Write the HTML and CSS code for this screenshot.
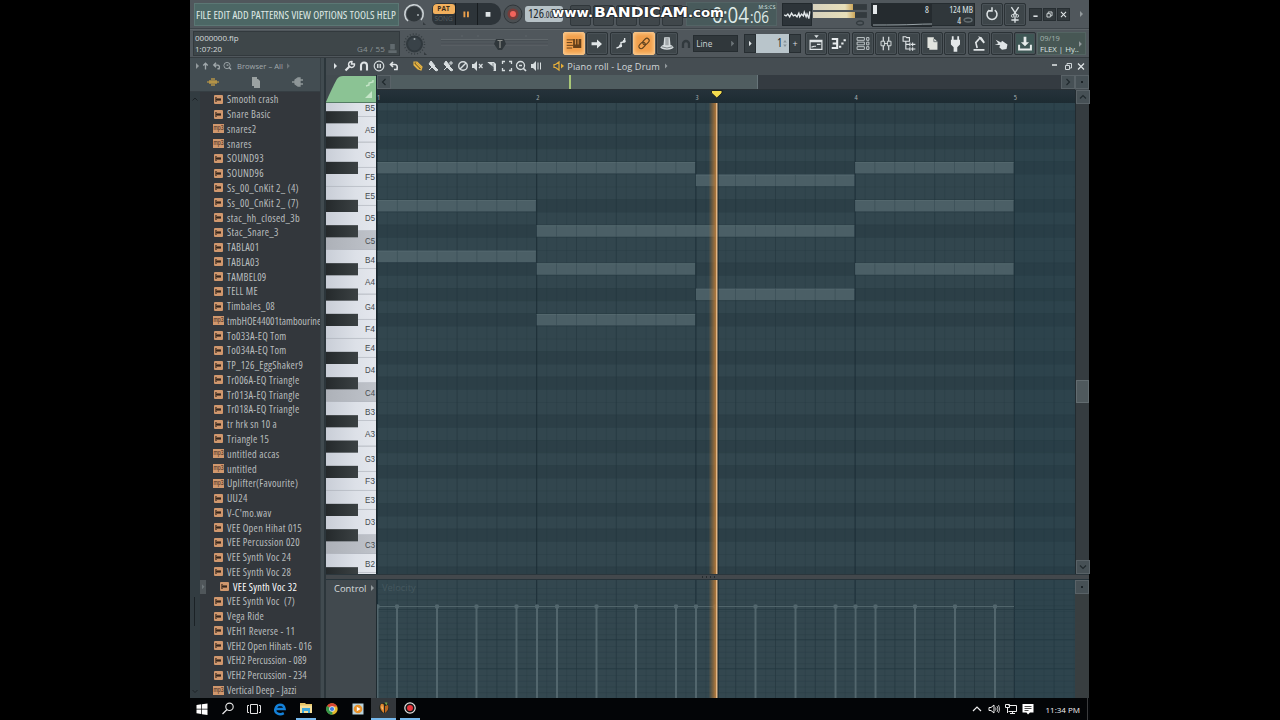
FILE: index.html
```html
<!DOCTYPE html>
<html lang="en">
<head>
<meta charset="utf-8">
<title>Piano roll - Log Drum</title>
<link rel="stylesheet" href="styles.css">
</head>
<body>
<main class="desktop">
  <div class="watermark">
    <svg width="180" height="24" viewBox="0 0 180 24"><text x="3" y="16.500" textLength="41" lengthAdjust="spacingAndGlyphs" font-size="12.500">www.</text><text x="45" y="16.500" textLength="94" lengthAdjust="spacingAndGlyphs" font-size="13.500">BANDICAM</text><text x="139" y="16.500" textLength="36" lengthAdjust="spacingAndGlyphs" font-size="12.500">.com</text></svg>
  </div>
  <header class="toolbar">
    <div class="row">
      <nav class="menu"><span>FILE</span><span>EDIT</span><span>ADD</span><span>PATTERNS</span><span>VIEW</span><span>OPTIONS</span><span>TOOLS</span><span>HELP</span></nav>
      <svg class="knob" viewBox="0 0 32 28"><circle cx="15" cy="14" r="7.5" fill="#30373b"/><path d="M9 21A9.2 9.2 0 1 1 22 20" fill="none" stroke="#cbd2d5" stroke-width="1.6"/><circle cx="19" cy="15" r="1" fill="#aab2b5"/><path d="M24 25v-3l3 3z" fill="#343b3f"/></svg>
      <div class="transport">
        <div class="patsong"><b>PAT</b><i>SONG</i></div>
        <svg viewBox="0 0 22 22"><path d="M7.800 8.500h2v6h-2zM11.500 8.500h2v6h-2z" fill="#eca04b"/></svg>
        <svg viewBox="0 0 22 22"><path d="M8 9h5v5H8z" fill="#dfe4e6"/></svg>
      </div>
      <svg class="rec" viewBox="0 0 20 20"><circle cx="10" cy="10" r="9" fill="#4b4f52" stroke="#30363a"/><circle cx="10" cy="10" r="5.500" fill="#783c39"/><circle cx="10" cy="10" r="3" fill="#f2645c"/></svg>
      <div class="tempo">126<small>.000</small></div>
      <div class="ghosts"><span></span><span></span><span></span><span></span><span></span></div>
      <div class="clock"><svg width="92" height="24" viewBox="0 0 92 24"><text x="25" y="20" font-size="21.500" textLength="37" lengthAdjust="spacingAndGlyphs">0:04</text><text x="63" y="20" font-size="15.500" textLength="19" lengthAdjust="spacingAndGlyphs">:06</text><text x="71.500" y="6" font-size="5" textLength="17">M:S:CS</text></svg></div>
      <svg class="scope" viewBox="0 0 30 23"><path d="M1 12l2 1 2-2 2 3 2-4 2 3 2-1 2 2 2-4 1 4 2-3 2 2 1-4 2 5 1-3 2 5 1-8" fill="none" stroke="#e5eaec" stroke-width="1.500"/></svg>
      <div class="meters"><span></span><span class="long"></span><svg viewBox="0 0 10 6"><ellipse cx="5" cy="3" rx="3.500" ry="2" fill="none" stroke="#343c40" stroke-width="1.300"/></svg></div>
      <div class="cpu">
        <svg viewBox="0 0 60 23"><path d="M1 1h4v9H1z" fill="#e4e8ea"/><path d="M1 21q30 0 40-.5t19-.5" fill="none" stroke="#98a2a6"/></svg>
        <span class="voices">8</span><div class="mem"><span>124 MB</span><span>4 <svg viewBox="0 0 10 6"><ellipse cx="5" cy="3" rx="4" ry="2" fill="none" stroke="#657074" stroke-width="1.300"/></svg></span></div>
      </div>
      <div class="tools first">
        <svg class="btn" viewBox="0 0 22 22"><path d="M8 6.300A5.500 5.500 0 1 0 14 6.300M11 3v4H7.500" fill="none" stroke="#dbe1e3" stroke-width="1.700"/></svg>
        <svg class="btn" viewBox="0 0 22 22"><path d="M7 3l6 9M15 3l-6 9M7 17h8M11 13v7" fill="none" stroke="#dbe1e3" stroke-width="1.500"/><circle cx="8.500" cy="12.500" r="1.500" fill="none" stroke="#dbe1e3"/><circle cx="13.500" cy="12.500" r="1.500" fill="none" stroke="#dbe1e3"/></svg>
      </div>
      <div class="winbtns">
        <svg viewBox="0 0 13 13"><path d="M4 8.500h5" stroke="#e3e8ea" stroke-width="1.800"/></svg>
        <svg viewBox="0 0 13 13"><path d="M3.500 5.500h4v4h-4zM5 5V3.500h4.500v4.500H8" fill="none" stroke="#e3e8ea"/></svg>
        <svg viewBox="0 0 13 13"><path d="M3.500 3.500l6 6M9.500 3.500l-6 6" stroke="#e3e8ea" stroke-width="1.200"/></svg>
      </div>
      <span class="arrow end"></span>
    </div>
    <div class="row second">
      <div class="hint"><div class="file">0000000.flp</div><div class="pos"><span>1:07:20</span><em>G4 / 55 <svg viewBox="0 0 9 12"><path d="M2 1h5v6H2zM0 8h9v3H0z" fill="#616a6e"/></svg></em></div></div>
      <svg class="knob" viewBox="0 0 32 28"><circle cx="14.500" cy="14" r="10" fill="none" stroke="#353d41" stroke-width="1.500" stroke-dasharray="1 2"/><circle cx="14.500" cy="14" r="8.500" fill="#30383d"/><circle cx="14.500" cy="14" r="6.500" fill="#394248"/><circle cx="14.500" cy="9" r="1" fill="#99a2a6"/><path d="M24 25v-3l3 3z" fill="#343b3f"/></svg>
      <svg class="slider" viewBox="0 0 130 28"><path d="M9 9.500h107M9 15h107" stroke="#60676b"/><path d="M9 10.500h107M9 14h107" stroke="#484f54"/><path d="M30 5v2M46 5v2M94 5v2" stroke="#5c6468"/><path d="M64 9h8l2 5-4 6h-4l-4-6z" fill="#30373b"/><path d="M65.500 10.500h5M68 11v7" stroke="#8b8e8b" stroke-width="1.200"/></svg>
      <div class="tools">
        <svg class="btn on" viewBox="0 0 22 22"><path d="M3 7h7M3 10h6M3 13h7M3 16h6" stroke="#65401a" stroke-width="1.100"/><path d="M10 6h2v6h1V6h2v6h1V6h3v10h-9z" fill="#65401a"/></svg>
        <svg class="btn" viewBox="0 0 22 22"><path d="M5 9.500h6V6.500l5.500 5-5.500 5v-3.500H5z" fill="#e1e6e8"/></svg>
        <svg class="btn" viewBox="0 0 22 22"><path d="M6 16l5-2V10l4-1V5" fill="none" stroke="#e1e6e8" stroke-width="1.500"/><circle cx="10.500" cy="13.500" r="1.700" fill="#e1e6e8"/><circle cx="14.500" cy="8.500" r="1.500" fill="#e1e6e8"/></svg>
        <svg class="btn on" viewBox="0 0 22 22"><g transform="rotate(-45 11 11)" fill="none" stroke="#5e421f" stroke-width="1.200"><rect x="4" y="8.500" width="8" height="5" rx="2.500"/><rect x="10" y="8.500" width="8" height="5" rx="2.500"/></g></svg>
        <svg class="btn" viewBox="0 0 22 22"><path d="M8 4h6l1 10H7z" fill="#d7dddf"/><ellipse cx="11" cy="15" rx="7" ry="3" fill="#d7dddf"/><path d="M5 14.500q6 3 12 0M10 5v8M12 5v8" fill="none" stroke="#5b6366" stroke-width=".8"/></svg>
      </div>
      <svg class="magnet" viewBox="0 0 12 12"><path d="M3 10V6a3 3 0 0 1 6 0v4" fill="none" stroke="#31393d" stroke-width="2.300"/></svg>
      <div class="select"><span>Line</span><span class="arrow dim"></span></div>
      <div class="pattern"><div><span class="arrow light"></span></div><b>1</b><i><svg viewBox="0 0 4 10"><path d="M0 4l2-3 2 3zM0 6l2 3 2-3z" fill="#879297"/></svg></i><div>+</div></div>
      <div class="tools panels">
        <svg class="btn" viewBox="0 0 22 22"><path d="M9 2h5l-2.500 3z" fill="#dfe4e6"/><path d="M4.500 7.500h13v10h-13zM4 9h14M6 15l3-1M9 14h2M12 12h4" fill="none" stroke="#dfe4e6" stroke-width="1.300"/></svg>
        <svg class="btn" viewBox="0 0 22 22"><path d="M3 6h6v10H3M4 11h5" fill="none" stroke="#e8ecee" stroke-width="2.300"/><path d="M11 14.500h2.500M13.500 11h2.500M16 7.500h2.500" stroke="#e8ecee" stroke-width="2.300"/></svg>
        <svg class="btn" viewBox="0 0 22 22"><path d="M4.500 4.500h8v3h-8zM4.500 9.500h8v3h-8zM4.500 14.500h8v3h-8zM15 4.500h2.500v3H15zM15 9.500h2.500v3H15zM15 14.500h2.500v3H15z" fill="none" stroke="#cbd2d5" stroke-width="1"/></svg>
        <svg class="btn" viewBox="0 0 22 22"><path d="M8 3.500v15M14 3.500v15" stroke="#dfe4e6" stroke-width="1.300"/><path d="M5.500 8.500h4v5h-4zM12.500 8.500h4v5h-4zM9 11h4" fill="#454e52" stroke="#dfe4e6"/></svg>
        <svg class="btn" viewBox="0 0 22 22"><path d="M4.500 3.500h3l1 1h3v4h-7zM7.500 9v8h5M7.500 12h4M12 10v4M12 15v4M13 12h5M13 17h5M15 10v4M15 15v4" fill="none" stroke="#dfe4e6" stroke-width="1.200"/></svg>
        <svg class="btn" viewBox="0 0 22 22"><path d="M6 4h7v2h1l3 3v9H8v-2H6z" fill="#e2e4df"/><path d="M13 6v3h3.500" fill="none" stroke="#687174"/></svg>
        <svg class="btn" viewBox="0 0 22 22"><path d="M7.500 3h2v4h4V3h2v4h1v5l-3 3v5h-4v-5l-3-3V7h1z" fill="#e4e8ea"/></svg>
        <svg class="btn" viewBox="0 0 22 22"><path d="M12 5l-4.500 5 1.500 6" fill="none" stroke="#dfe4e6" stroke-width="1.800"/><path d="M10 3l4 1 3.500 5.500-1.500 1.500-3.500-4zM5 17h12v2H5z" fill="#dfe4e6"/></svg>
        <svg class="btn" viewBox="0 0 22 22"><path d="M4 7l6 3 1-2 6 4-1 5-5 1-3-3 1-2-6-1 4-1z" fill="#dfe4e6"/></svg>
        <svg class="btn green" viewBox="0 0 22 22"><path d="M9.500 3.500h3v6h3L11 14 6.500 9.500h3z" fill="#e7eceb"/><path d="M4.500 12.500v5h13v-5" fill="none" stroke="#e7eceb" stroke-width="2.200"/></svg>
      </div>
      <div class="news"><span>09/19</span><b>FLEX | Hy..</b><i class="arrow"></i></div>
    </div>
  </header>

  <section class="workspace">
    <aside class="browser">
      <div class="browser-head">
        <div class="crumbs"><span class="arrow"></span><svg viewBox="0 0 10 10"><path d="M5 9V2M2.500 4.500L5 2l2.500 2.500" fill="none" stroke="#a0a8ab" stroke-width="1.500"/></svg><svg viewBox="0 0 10 10"><path d="M2 4h4q3 0 2 4H6M4.500 1.500L2 4l2.500 2.500" fill="none" stroke="#a0a8ab" stroke-width="1.500"/></svg><svg viewBox="0 0 10 10"><circle cx="4.500" cy="4.500" r="3.500" fill="none" stroke="#a0a8ab"/><path d="M4 4h2M6.500 6.500L9 9" stroke="#a0a8ab" stroke-width="1.500"/></svg><span class="where">Browser – All</span><span class="arrow dim"></span></div>
        <div class="tabs"><svg viewBox="0 0 12 12"><path d="M0 6h12M3 4v4M5 2v8M7 2v8M9 4v4" stroke="#d0a545" stroke-width="1.200"/></svg><svg viewBox="0 0 12 12"><path d="M2 1h5v2h1l2 2v7H4v-2H2z" fill="#9ba2a2"/></svg><svg viewBox="0 0 12 12"><path d="M0 6h3M3 4l3-2h2v8H6L3 8zM8 4h3M8 8h3" fill="#8e9698" stroke="#8e9698" stroke-width="1.300"/></svg></div>
      </div>
      <div class="browser-body">
        <div class="browser-scroll"><svg viewBox="0 0 8 8"><path d="M1.500 5.500L4 3l2.500 2.500" fill="none" stroke="#1c2327"/></svg><span></span><svg viewBox="0 0 8 8"><path d="M1.500 3L4 5.500 6.500 3" fill="none" stroke="#1c2327"/></svg></div>
        <ul class="files" id="files"></ul>
      </div>
    </aside>
    <div class="divider"></div>
    <section class="roll">
      <div class="roll-title">
        <span class="arrow light"></span>
        <svg viewBox="0 0 12 12"><path d="M1.500 10.500L6 6" stroke="#e0e4e6" stroke-width="2.200"/><path d="M10.500 4A3 3 0 1 1 8 1.500L7.500 4z" fill="none" stroke="#e0e4e6" stroke-width="1.400"/></svg>
        <svg viewBox="0 0 12 12"><path d="M3 10.500V5.500a3 3 0 0 1 6 0v5" fill="none" stroke="#e0e4e6" stroke-width="2.100"/></svg>
        <svg viewBox="0 0 12 12"><circle cx="6" cy="6" r="4.800" fill="none" stroke="#d2d8da" stroke-width="1.200"/><path d="M4 4h1.500v4H4zM6.500 4H8v4H6.500z" fill="#d2d8da"/></svg>
        <svg viewBox="0 0 12 12"><path d="M2 4.500h5q3 0 2 5H6M5 2L2.500 4.500 5 7" fill="none" stroke="#e0e4e6" stroke-width="1.600"/></svg>
        <svg class="gap" viewBox="0 0 12 12"><path d="M2 2h3l5 5-1 3-3-1-4-4zM4 3l5 5M2 4l5 5" fill="#6c5624" stroke="#e5b344" stroke-width="1.200"/></svg>
        <svg viewBox="0 0 12 12"><path d="M4 1l4 5-2 2-4-4zM7 6l4 4-2 1-3-3zM2 10l4-4" fill="#d7dddf" stroke="#d7dddf"/></svg>
        <svg viewBox="0 0 12 12"><path d="M4 1l4 5-2 2-4-4zM7 6l4 4-2 1-3-3zM2 10l4-4M9 1v4M7 3h4" fill="#d7dddf" stroke="#d7dddf"/></svg>
        <svg viewBox="0 0 12 12"><circle cx="6" cy="6" r="4.300" fill="none" stroke="#d7dddf" stroke-width="1.400"/><path d="M3 9l6-6" stroke="#d7dddf" stroke-width="1.400"/></svg>
        <svg viewBox="0 0 12 12"><path d="M1 4h2l3-3v10L3 8H1z" fill="#d7dddf"/><path d="M8 4l3.500 4M11.500 4L8 8" stroke="#d7dddf" stroke-width="1.200"/></svg>
        <svg viewBox="0 0 12 12"><path d="M1 2h7l2 2v7H7.500V7z" fill="#d7dddf"/><path d="M1 2l7 8M7 3v6" stroke="#566065" stroke-width=".7"/></svg>
        <svg viewBox="0 0 12 12"><path d="M4 1.500H1.500V4M8 1.500h2.500V4M1.500 8v2.500H4M10.500 8v2.500H8" fill="none" stroke="#d7dddf" stroke-width="1.300"/></svg>
        <svg viewBox="0 0 12 12"><circle cx="5.500" cy="5.500" r="4" fill="none" stroke="#d7dddf" stroke-width="1.300"/><path d="M4 5.500h3M8 8l3 3" stroke="#d7dddf" stroke-width="1.700"/></svg>
        <svg viewBox="0 0 12 12"><path d="M1 4h2l3-3v10L3 8H1zM7.500 2.500h1v7h-1zM10 2.500h1v7h-1z" fill="#d7dddf"/></svg>
        <svg class="gap2" viewBox="0 0 12 12"><path d="M1 4.500h1.500L6 2v8L2.500 7.500H1z" fill="none" stroke="#e4ad3a" stroke-width="1.200"/><path d="M8 3.500l3 2.500-3 2.500z" fill="#e4ad3a"/></svg>
        <span class="title">Piano roll - Log Drum</span><span class="arrow"></span>
        <span class="spacer"></span>
        <div class="subwin"><svg viewBox="0 0 12 12"><path d="M4 5h5" stroke="#e3e8ea" stroke-width="1.500"/></svg><svg viewBox="0 0 12 12"><path d="M3.500 5.500h4v4h-4zM5 5V3.500h4.500v4.500H8" fill="none" stroke="#cfd5d8"/></svg><svg viewBox="0 0 12 12"><path d="M3 3.500l6 6M9 3.500l-6 6" stroke="#e3e8ea" stroke-width="1.200"/></svg></div>
      </div>
      <div class="roll-grid">
        <svg class="corner" viewBox="0 0 51 28"><path d="M0 28L0 27Q6 13 11 4q2-3 6-3h34v27z" fill="#8bc394"/><path d="M0 27.500h51" stroke="#537b63"/><path d="M50.500 0v28" stroke="#1c2b31"/><path d="M40 11l3-1V8l4-1V5" fill="none" stroke="#c5e5c8" stroke-width="1.400"/><path d="M39 23h7v-7z" fill="#c5e5c8"/></svg>
        <div class="hscroll"><span class="cap"><svg viewBox="0 0 8 8"><path d="M5.500 1L2.500 4l3 3" fill="none" stroke="#20292d" stroke-width="1.200"/></svg></span><span class="thumb"></span><span class="cap right"><svg viewBox="0 0 8 8"><path d="M2.500 1l3 3-3 3" fill="none" stroke="#20292d" stroke-width="1.200"/></svg></span></div>
        <div class="cap dot"><i></i></div>
        <svg class="ruler" id="ruler" viewBox="377 90 698 13"></svg>
        <div class="vscroll"><span class="cap"><svg viewBox="0 0 8 8"><path d="M1 5.500l3-3 3 3" fill="none" stroke="#20292d" stroke-width="1.200"/></svg></span><span class="vthumb"></span><span class="cap"><svg viewBox="0 0 8 8"><path d="M1 2.500l3 3 3-3" fill="none" stroke="#20292d" stroke-width="1.200"/></svg></span></div>
        <svg class="keys" id="keys" viewBox="326 103 51 471"></svg>
        <svg class="notes" id="notes" viewBox="377 103 698 471"></svg>
      </div>
      <div class="splitter"><i></i><i></i><i></i><i></i></div>
      <div class="control">
        <div class="control-name"><span>Control</span><span class="arrow"></span></div>
        <svg class="velocity" id="velocity" viewBox="377 580 698 118"></svg>
        <div class="control-side"><span class="cap"><i></i></span></div>
      </div>
    </section>
  </section>

  <footer class="taskbar">
    <div class="task"><svg viewBox="0 0 16 16"><path d="M2.500 4l4.800-.7v4.500H2.500zM8 3.200l5.500-.8v5.400H8zM2.500 8.500h4.800V13l-4.800-.7zM8 8.500h5.500V14L8 13.200z" fill="#fff"/></svg></div>
    <div class="task"><svg viewBox="0 0 16 16"><circle cx="9.500" cy="5.800" r="3.700" fill="none" stroke="#e8e8e8" stroke-width="1.100"/><path d="M7 8.500L2.500 13" stroke="#e8e8e8" stroke-width="1.200"/></svg></div>
    <div class="task"><svg viewBox="0 0 16 16"><path d="M4.500 3.500h7v9h-7zM3 4.500H1.500v7H3M13 4.500h1.500v7H13" fill="none" stroke="#e2e2e2"/></svg></div>
    <div class="task"><svg viewBox="0 0 16 16"><path d="M3.300 8h9.300Q12 3.800 8 3.800 4.300 4 3.200 8.500c-.5 4 4.500 6 8.600 3.600" fill="none" stroke="#1481d8" stroke-width="2.400"/></svg></div>
    <div class="task open"><svg viewBox="0 0 16 16"><path d="M2 3h5l1 1h6v9H2z" fill="#e6c467"/><path d="M2 5.500h12V13H2z" fill="#f5df99"/><path d="M4 8h8v5h-2v-2H6v2H4z" fill="#3fa9dc"/></svg></div>
    <div class="task"><svg viewBox="0 0 16 16"><circle cx="8" cy="8" r="5.700" fill="#e5b92c"/><path d="M8 8L3 5.200A5.700 5.700 0 0 1 13.200 5.600H8z" fill="#d94334"/><path d="M8 8l.5 5.700A5.700 5.700 0 0 1 3 5z" fill="#34974b"/><circle cx="8" cy="8" r="2.800" fill="#e8eef5"/><circle cx="8" cy="8" r="2.100" fill="#3f7de0"/></svg></div>
    <div class="task"><svg viewBox="0 0 16 16"><path d="M2.500 2.500h11v11h-11z" fill="#b8d3dd"/><circle cx="8" cy="8" r="4.300" fill="#e89027"/><path d="M6.800 5.700L10.500 8l-3.700 2.300z" fill="#fff"/></svg></div>
    <div class="task open active"><svg viewBox="0 0 16 16"><path d="M8 3c3 0 5 2 5 5s-3 5-5 5-5-2-5-5 2-5 5-5z" fill="#25271f"/><path d="M8 13C5 11 3 7 5 4q3-1 3 2v6z" fill="#e0842c"/><path d="M9 13c3-2 4-5 3-8l-3 1z" fill="#b8641f"/><path d="M8.500 2.500h3l-1 3z" fill="#70a648"/><path d="M6 5l1 5-1.500-2z" fill="#ffe29c"/></svg></div>
    <div class="task open"><svg viewBox="0 0 16 16"><circle cx="8" cy="8" r="5.200" fill="#141414" stroke="#e5e5e5" stroke-width="1.200"/><circle cx="8" cy="8" r="3" fill="#e9343b"/></svg></div>
    <span class="spacer"></span>
    <div class="tray"><svg viewBox="0 0 12 12"><path d="M2 8l4-4 4 4" fill="none" stroke="#eee" stroke-width="1.200"/></svg><svg viewBox="0 0 12 12"><path d="M1 4.500h2l3-2.500v8L3 7.500H1z" fill="none" stroke="#eee"/><path d="M7.500 4.500q1 1.500 0 3M9 3q2 3 0 6M10.500 2q2.500 4 0 8" fill="none" stroke="#eee" stroke-width=".8"/></svg><svg viewBox="0 0 12 12"><path d="M3.500 2.500h8v6h-8M.500 1.500h4v3h-4zM2.500 5v5M7.500 9v2M5 10.500h5" fill="none" stroke="#eee"/></svg><svg viewBox="0 0 12 12"><path d="M.500 1h11v8.500H8L6 11.500 4.500 9.500h-4z" fill="#fff"/><path d="M2.500 3.500h7M2.500 5.500h7M2.500 7.500h4" stroke="#222" stroke-width=".8"/></svg><time>11:34 PM</time></div>
  </footer>
</main>
<script src="script.js"></script>
</body>
</html>
```
FILE: styles.css
```css
* { box-sizing: border-box; }
body { margin: 0; background: #000; font-family: "Open Sans", "Noto Sans", sans-serif; color: #c3cacc; }
svg { display: block; flex: none; }
.desktop { position: relative; width: 900px; height: 720px; margin-left: 190px; overflow: hidden; display: flex; flex-direction: column; }
.spacer { flex: 1; }
.arrow { width: 3px; height: 6px; flex: none; background: #92999c; clip-path: polygon(0 0, 100% 50%, 0 100%); }
.arrow.light { background: #dfe4e6; }
.arrow.dim { background: #6d7579; }

.watermark { position: absolute; left: 359px; top: 0; z-index: 4; }
.watermark text { font-family: "DejaVu Sans", sans-serif; font-weight: 700; fill: #fff; stroke: #23282b; stroke-width: 1.6px; paint-order: stroke; }

.toolbar { width: 899px; height: 58px; background: #50575c; border-bottom: 1px solid #353c40; flex: none; }
.row { display: flex; align-items: center; height: 29px; padding-left: 4px; border-bottom: 1px solid #3e454a; }
.row.second { height: 28px; border-top: 1px solid #5d6468; border-bottom: 0; padding-left: 3px; }
.menu { width: 205px; height: 23px; padding: 0 2px 0 1px; background: #4c6765; border: 1px solid #5b7774; display: flex; align-items: center; justify-content: space-between; font-size: 11px; font-stretch: 75%; color: #dfe8e4; }
.knob { width: 32px; height: 28px; }
.transport { display: flex; height: 22px; width: 69px; background: #2d3439; border-radius: 6px 10px 10px 6px; overflow: hidden; margin-left: 1px; }
.transport svg { width: 22px; height: 22px; border-left: 1px solid #171c1f; }
.patsong { width: 23px; display: flex; flex-direction: column; align-items: center; font-size: 7px; line-height: 10px; }
.patsong b { width: 22px; height: 10px; margin-top: 1px; background: #f2b05d; border-radius: 4px 3px 2px 2px; color: #3a2c1a; text-align: center; font-size: 6.5px; }
.patsong i { font-style: normal; color: #596165; font-size: 6.5px; }
.rec { width: 20px; height: 20px; margin-left: 2px; }
.tempo { width: 38px; height: 16px; margin-left: 2px; background: #b7c2c7; border-radius: 3px; color: #22292d; font-size: 12.5px; line-height: 16px; padding-left: 3px; font-stretch: 75%; white-space: nowrap; }
.tempo small { font-size: 8.5px; }
.ghosts { display: flex; gap: 2px; margin: 2px 0 0 7px; width: 115px; }
.ghosts span { width: 21px; height: 21px; background: #40474b; border: 1px solid #30373b; border-radius: 2px; }
.clock { width: 91px; height: 24px; margin-left: 1px; background: #485a5b; border: 1px solid #536465; }
.clock text { fill: #dfebe8; font-family: "Open Sans", sans-serif; }
.scope { width: 30px; height: 23px; margin-left: 5px; background: #2d3439; border: 1px solid #22292d; }
.meters { width: 55px; height: 23px; margin-left: 1px; display: flex; flex-direction: column; gap: 2px; padding-top: 1px; }
.meters span { width: 40px; height: 6px; background: linear-gradient(90deg, #d8d2bd, #e7dfb9 80%, #cda75a); box-shadow: 14px 0 0 -0.1px #333a3e; }
.meters .long { width: 42px; box-shadow: 12px 0 0 -0.1px #333a3e; }
.meters svg { width: 10px; height: 6px; margin-left: 42px; }
.cpu { width: 104px; height: 23px; margin-left: 3px; background: #30373b; border: 1px solid #252c30; display: flex; position: relative; font-size: 9px; color: #dfe5e7; font-stretch: 75%; }
.cpu > svg { width: 60px; height: 23px; background: #252b2f; }
.cpu .voices { position: absolute; left: 53px; top: 0; line-height: 11px; }
.mem { flex: 1; padding-right: 1px; display: flex; flex-direction: column; align-items: flex-end; line-height: 11px; }
.mem span { display: flex; align-items: center; gap: 2px; }
.mem svg { width: 10px; height: 6px; }
.tools { display: flex; gap: 1px; }
.tools.first { margin-left: 6px; }
.btn { width: 22px; height: 23px; background: #3e464a; border: 1px solid #2b3236; border-radius: 2px; box-shadow: inset 0 0 0 1px #495156; }
.btn.on { background: #f2a04c; border-color: #f6c386; box-shadow: inset 0 0 4px #ffd59d; }
.btn.green { background: #3f5755; }
.winbtns { display: flex; gap: 1px; margin-left: 3px; }
.winbtns svg { width: 13px; height: 13px; background: #32393d; border: 1px solid #272e32; }
.arrow.end { margin-left: 10px; }

.hint { width: 207px; height: 25px; background: #3e4649; border: 1px solid #32393d; padding-left: 1px; font-size: 8px; line-height: 11px; color: #d4dadb; }
.hint .pos { display: flex; justify-content: space-between; height: 11px; }
.hint em { font-style: normal; color: #8b9497; display: flex; gap: 3px; padding-right: 2px; letter-spacing: .2px; }
.hint em svg { width: 9px; height: 11px; }
.slider { width: 130px; height: 28px; }
.row.second .btn { width: 22px; }
.row.second .tools:not(.panels) { margin-left: 1px; gap: 1.3px; }
.tools.panels { margin-left: 4px; gap: 1.2px; }
.magnet { width: 12px; height: 12px; margin-left: 2px; }
.select { width: 45px; height: 17px; margin-left: 1px; padding: 0 3px 0 2px; background: #30373b; border: 1px solid #262d31; display: flex; align-items: center; justify-content: space-between; font-size: 8.3px; color: #cbd1d3; }
.pattern { display: flex; height: 19px; width: 57px; margin-left: 6px; background: #b9c5cb; color: #252d31; align-items: stretch; }
.pattern div { width: 12px; background: #373f43; color: #d6dcde; display: flex; align-items: center; justify-content: center; font-size: 9px; border: 1px solid #272e32; }
.pattern b { flex: 1; text-align: right; font-size: 12px; font-weight: 400; font-stretch: 75%; line-height: 18px; }
.pattern i { width: 7px; padding: 5px 1px; }
.pattern i svg { width: 4px; height: 9px; }
.news { position: relative; width: 49px; height: 23px; margin-left: 1px; background: #475754; border: 1px solid #536462; padding-left: 2px; font-size: 7.5px; line-height: 10.5px; white-space: nowrap; color: #a5b4b0; }
.news span, .news b { display: block; font-weight: 400; }
.news b { color: #dbe4e1; font-size: 7.8px; font-stretch: 88%; }
.news .arrow { position: absolute; right: 3px; top: 8px; }

.workspace { display: flex; height: 640px; width: 899px; flex: none; background: #434b50; }
.browser { width: 130px; display: flex; flex-direction: column; }
.browser-head { height: 34px; background: #434d52; border-bottom: 1px solid #363e43; flex: none; }
.crumbs { height: 16px; display: flex; align-items: center; gap: 2px; padding-left: 6px; font-size: 7.6px; color: #a2a9ac; white-space: nowrap; }
.crumbs svg { width: 9px; height: 10px; }
.crumbs .where { margin-left: 3px; }
.crumbs .arrow.dim { margin-left: 2px; }
.tabs { display: flex; gap: 31px; padding: 2px 0 0 17px; }
.tabs svg { width: 12px; height: 12px; }
.tabs svg:nth-child(n+3) { margin-left: -1px; }
.browser-body { flex: 1; display: flex; background: #33373c; min-height: 0; }
.browser-scroll { width: 10px; background: #323c41; display: flex; flex-direction: column; padding: 3px 1px; justify-content: space-between; }
.browser-scroll svg { width: 8px; height: 8px; }
.browser-scroll span { width: 1px; height: 29px; margin: auto 2px 61px 3px; background: #1b2226; }
.files { list-style: none; margin: 0; padding: 0 0 0 3px; flex: 1; }
.files li { height: 14.77px; display: flex; align-items: center; padding-left: 10px; }
.files .icon { width: 9px; height: 9px; background: #d0976d; border-radius: 1px; margin: 0 4px 0 1px; }
.files .mp3 { width: 11px; height: 9px; margin: 0 3px 0 0; background: #d0976d; }
.files .mp3 text { font-family: "Liberation Sans", sans-serif; font-size: 6.5px; fill: #35261d; }
.files .name { font-size: 10.3px; font-stretch: 75%; letter-spacing: .28px; white-space: pre; color: #b9bdbe; line-height: 14px; }
.files .tight { letter-spacing: .06px; }
.files .selected { padding-left: 0; }
.files .selected .name { color: #fff; }
.files .handle { width: 6px; height: 14px; background: #50565a; display: flex; align-items: center; justify-content: center; margin: 0 10px 0 -3px; }
.files .handle + .icon { margin-left: 4px; }
.divider { width: 6px; background: #414b50; border-right: 2px solid #2c363b; border-left: 1px solid #363f44; }

.roll { width: 763px; display: flex; flex-direction: column; }
.roll-title { height: 17px; background: #454d52; display: flex; align-items: center; padding: 0 0 1px 8px; gap: 2.7px; }
.roll-title > svg { width: 12px; height: 12px; }
.roll-title > .arrow:first-child { margin-right: 4px; }
.roll-title .gap { margin-left: 10px; }
.roll-title .gap2 { margin-left: 8px; }
.roll-title .title { font-size: 9.2px; color: #d2d7d9; margin: 0 2px 0 0; white-space: nowrap; letter-spacing: .1px; }
.subwin { display: flex; gap: 1.5px; padding-right: 2px; }
.subwin svg { width: 12px; height: 12px; }
.roll-grid { display: grid; grid-template-columns: 51px 698px 14px; grid-template-rows: 15px 13px 471px; }
.corner { grid-row: 1 / 3; width: 51px; height: 28px; }
.hscroll { display: flex; background: #343b41; justify-content: space-between; border-bottom: 1px solid #293136; }
.cap { width: 14px; height: 14px; background: #465055; border: 1px solid #596267; display: flex; align-items: center; justify-content: center; flex: none; }
.cap svg { width: 8px; height: 8px; }
.cap i { width: 2px; height: 2px; background: #1b2327; }
.thumb { width: 367px; margin-right: auto; background: linear-gradient(90deg, transparent 178px, #a9c777 178px 180px, transparent 180px), #505d60; border-right: 1px solid #68757a; }
.ruler { grid-column: 2; grid-row: 2; width: 698px; height: 13px; background: linear-gradient(#25323a, #1d2b32); overflow: visible; z-index: 1; }
.ruler text { font-size: 7.5px; font-stretch: 80%; fill: #a4adb0; }
.vscroll { grid-column: 3; grid-row: 2 / 4; display: flex; flex-direction: column; background: #353c40; border-left: 1px solid #222b30; }
.vthumb { height: 23px; margin: 276px 0 auto; background: #4f595d; border: 1px solid #626c70; }
.keys { grid-column: 1; grid-row: 3; width: 51px; height: 471px; }
.keys text { font-family: "Liberation Sans", sans-serif; font-size: 8.5px; fill: #454b50; text-anchor: end; }
.notes { grid-column: 2; grid-row: 3; width: 698px; height: 471px; }
.splitter { height: 6px; background: #43484c; border-top: 1px solid #2b363c; border-bottom: 1px solid #27343b; display: flex; align-items: center; gap: 3px; padding-left: 376px; }
.splitter i { width: 1px; height: 2px; background: #252b2e; }
.control { display: flex; height: 118px; }
.control-name { width: 51px; background: #41494e; border-right: 1px solid #1e2b31; display: flex; align-items: center; height: 118px; padding: 0 2px 102px 8px; font-size: 9.4px; color: #d7dcde; justify-content: space-between; }
.velocity { width: 698px; height: 118px; }
.velocity text { font-size: 9.4px; fill: #45585f; }
.control-side { width: 14px; background: #383e40; }

.taskbar { height: 22px; background: #030507; display: flex; align-items: center; margin-left: -1px; }
.task { width: 26px; height: 22px; display: flex; justify-content: center; align-items: center; }
.task svg { width: 16px; height: 16px; }
.task.open { border-bottom: 2px solid #76b9ed; width: 20px; margin: 0 3px; }
.task.active { width: 25px; margin: 0 3px 0 0; background: #33373b; }
.task.active + .task { margin-left: 1px; }
.tray { display: flex; gap: 5px; align-items: center; padding-right: 7px; height: 22px; border-right: 1px solid #3a3c3e; margin-right: 2px; }
.tray svg { width: 12px; height: 12px; }
.tray time { margin-left: 7px; font-size: 8px; color: #f1f1f1; white-space: nowrap; }
```
FILE: script.js
```js
const files = [
  'Smooth crash', 'Snare Basic', '*snares2', '*snares', 'SOUND93', 'SOUND96', 'Ss_00_CnKit 2_ (4)',
  'Ss_00_CnKit 2_ (7)', 'stac_hh_closed_3b', 'Stac_Snare_3', 'TABLA01', 'TABLA03', 'TAMBEL09', 'TELL ME',
  'Timbales_08', '*tmbHOE44001tambourine', 'To033A-EQ Tom', 'To034A-EQ Tom', 'TP_126_EggShaker9',
  'Tr006A-EQ Triangle', 'Tr013A-EQ Triangle', 'Tr018A-EQ Triangle', 'tr hrk sn 10 a', 'Triangle 15',
  '*untitled accas', '*untitled', '*Uplifter(Favourite)', 'UU24', "V-C'mo.wav", 'VEE Open Hihat 015',
  'VEE Percussion 020', 'VEE Synth Voc 24', 'VEE Synth Voc 28', '>VEE Synth Voc 32', 'VEE Synth Voc  (7)',
  'Vega Ride', 'VEH1 Reverse - 11', 'VEH2 Open Hihats - 016', 'VEH2 Percussion - 089',
  'VEH2 Percussion - 234', '*Vertical Deep - Jazzi'
];
const wave = '<svg class="icon" viewBox="0 0 9 9"><path d="M2 2v5M2 4.500h5M4 3v3M6 3v3" stroke="#35261d" stroke-width="1.200"/></svg>';
const mp3Icon = '<svg class="mp3" viewBox="0 0 11 9"><text x=".5" y="6.300" textLength="10" lengthAdjust="spacingAndGlyphs">mp3</text></svg>';
document.getElementById('files').innerHTML = files.map(f => {
  const mp3 = f[0] === '*', sel = f[0] === '>';
  const name = mp3 || sel ? f.slice(1) : f;
  return `<li class="${sel ? 'selected' : ''}">${sel ? '<span class="handle"><i class="arrow dim"></i></span>' : ''}` +
    (mp3 ? mp3Icon : wave) + `<span class="name${name.length > 20 ? ' tight' : ''}">${name}</span></li>`;
}).join('');

const rect = (x, y, w, h, fill, extra = '') => `<rect x="${x}" y="${y}" width="${w}" height="${h}" fill="${fill}" ${extra}/>`;
const ROW = 152 / 12, TOP = 98, LEFT = 377.5, BAR = 159.2;
const black = [1, 3, 5, 8, 10];

// Keyboard, octaves from high to low
const whites = [['B', 0, 1.5], ['A', 1.5, 3.5], ['G', 3.5, 5.5], ['F', 5.5, 7], ['E', 7, 8.5], ['D', 8.5, 10.5], ['C', 10.5, 12]];
let k = '<defs><linearGradient id="w"><stop offset="0" stop-color="#c9ced7"/><stop offset=".6" stop-color="#dde1e8"/><stop offset="1" stop-color="#e4e7ed"/></linearGradient><linearGradient id="c"><stop offset="0" stop-color="#adb1b8"/><stop offset="1" stop-color="#bfc3ca"/></linearGradient><linearGradient id="b"><stop offset="0" stop-color="#252a2c"/><stop offset="1" stop-color="#3b4143"/></linearGradient></defs>';
for (let o = 0; o < 4; o++) {
  const y0 = TOP + o * 152;
  for (const [n, a, b] of whites) {
    const y = y0 + a * ROW, h = (b - a) * ROW;
    if (y > 574) continue;
    k += rect(326, y, 50, h, n === 'C' ? 'url(#c)' : 'url(#w)') + rect(326, y + h - .7, 50, .7, '#b3b8c0');
    if (y + h / 2 < 570) k += `<text x="375" y="${y + h / 2 + 3}" textLength="10" lengthAdjust="spacingAndGlyphs">${n}${5 - o}</text>`;
  }
  for (const i of black) k += rect(326, y0 + i * ROW + .5, 32, ROW - .5, 'url(#b)');
}
document.getElementById('keys').innerHTML = k + rect(376, 103, 1, 471, '#18242a');

// Background grid
let g = rect(377, 103, 698, 471, '#32464e');
for (let o = 0; o < 4; o++) for (const i of black) g += rect(377, TOP + o * 152 + i * ROW, 698, ROW, '#2c3f47');
for (let y = TOP + ROW; y < 574; y += ROW) g += rect(377, y, 698, .6, '#293c44', 'opacity=".5"');
const columns = (y, h) => {
  let s = '';
  for (let i = 0; i < 71; i++) {
    const x = LEFT + i * BAR / 16;
    if (x > 1075) break;
    s += rect(x - .5, y, 1, h, i % 16 === 0 ? '#192a32' : '#23363e', `opacity="${i % 16 === 0 ? .85 : i % 4 === 0 ? .6 : .22}"`);
  }
  return s;
};
g += columns(103, 471) + rect(1014, 103, 61, 471, '#203b48', 'opacity=".25"');

// Pattern notes: first bar, length in bars, row
const notes = [[0, 2, 5], [3, 1, 5], [2, 1, 6], [0, 1, 8], [3, 1, 8], [1, 2, 10], [0, 1, 12], [1, 1, 13], [3, 1, 13], [2, 1, 15], [1, 1, 17]];
for (const [start, len, row] of notes) {
  const x = LEFT + start * BAR, y = TOP + row * ROW + .7;
  g += rect(x, y, len * BAR - .8, ROW - 1.3, '#4b5f66');
  g += rect(x, y, len * BAR - .8, .8, '#566a70');
  for (let i = 1; i < len * 8; i++) g += rect(x + i * BAR / 8 - .5, y, .8, ROW - 1.3, '#384c54', 'opacity=".75"');
}
const head = (y, h) => '<defs><linearGradient id="p' + y + '"><stop offset="0" stop-color="#ad7535" stop-opacity="0"/><stop offset="1" stop-color="#b77a39" stop-opacity=".95"/></linearGradient></defs>' +
  rect(708.5, y, 7.5, h, `url(#p${y})`) + rect(716, y, 1.7, h, '#e2b584') + rect(717.7, y, .8, h, '#17252b');
document.getElementById('notes').innerHTML = g + head(103, 471);

// Ruler
let r = '';
for (let i = 0; i < 5; i++) r += `<text x="${LEFT + i * BAR - .5}" y="99.500">${i + 1}</text>`;
document.getElementById('ruler').innerHTML = r + '<path d="M711.500 90.500h10.500v2.500l-5.200 5-5.300-5z" fill="#f4dc4e" stroke="#141b1e" stroke-width=".9"/>';

// Velocity lane
let v = rect(377, 580, 698, 118, '#33474f') + columns(580, 118);
for (let y = 588; y < 698; y += 5.8) v += rect(377, y, 698, .7, '#263a42', 'opacity=".4"');
for (const y of [609, 639, 668]) v += rect(377, y, 698, 1, '#20333b', 'opacity=".5"');
v += rect(1014, 580, 61, 118, '#203b48', 'opacity=".25"') + '<text x="382" y="591">Velocity</text>' + rect(377, 606, 637, .9, '#55696f');
for (const x of [377.5, 397, 437, 476.5, 516.5, 537, 557, 596.5, 636, 676, 696, 715.5, 755.5, 795.5, 835.5, 855.5, 875.5, 915, 955, 995])
  v += rect(x - 1, 606, 2, 92, '#52666d') + `<circle cx="${x}" cy="606.500" r="2.300" fill="#52666d"/>`;
document.getElementById('velocity').innerHTML = v + head(580, 118);
```
